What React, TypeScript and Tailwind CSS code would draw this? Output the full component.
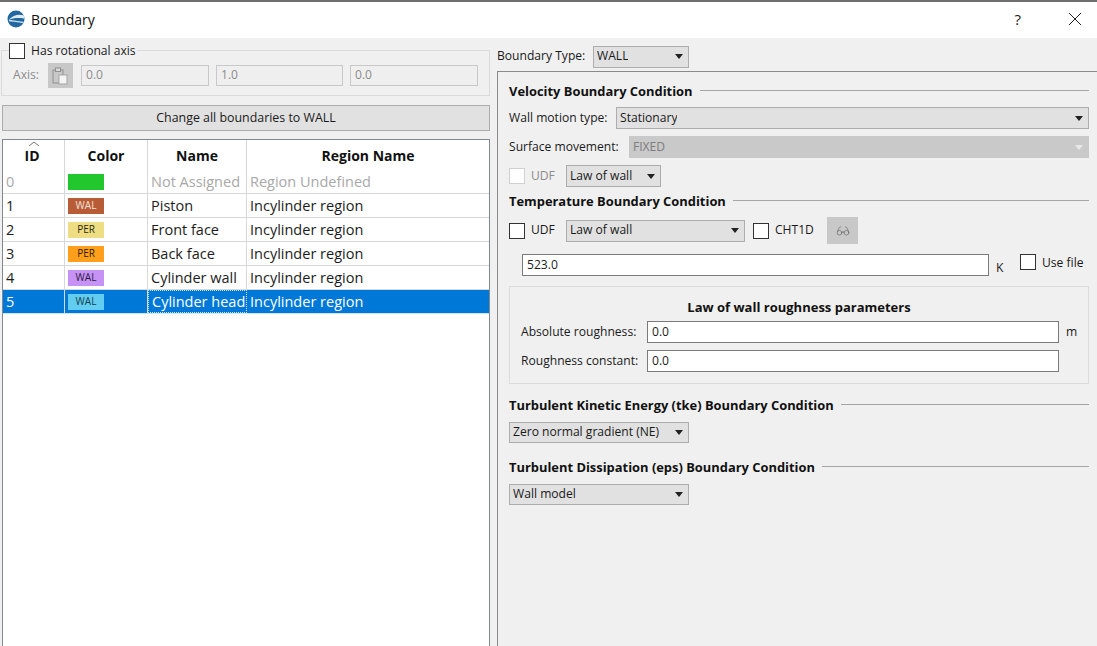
import { ReactNode } from 'react';
import { Glasses } from 'lucide-react';

type Row = {
  id: number;
  color: string;
  tag: string;
  tagColor: string;
  name: string;
  region: string;
};

const rows: Row[] = [
  { id: 0, color: 'bg-[#22c72e]', tag: '', tagColor: '', name: 'Not Assigned', region: 'Region Undefined' },
  { id: 1, color: 'bg-[#b85c38]', tag: 'WAL', tagColor: 'text-[#f5e3da]', name: 'Piston', region: 'Incylinder region' },
  { id: 2, color: 'bg-[#eedd82]', tag: 'PER', tagColor: 'text-[#2a2a10]', name: 'Front face', region: 'Incylinder region' },
  { id: 3, color: 'bg-[#ff9f1c]', tag: 'PER', tagColor: 'text-[#2a1c05]', name: 'Back face', region: 'Incylinder region' },
  { id: 4, color: 'bg-[#c792f5]', tag: 'WAL', tagColor: 'text-[#2a1a3f]', name: 'Cylinder wall', region: 'Incylinder region' },
  { id: 5, color: 'bg-[#62cdf0]', tag: 'WAL', tagColor: 'text-[#12414f]', name: 'Cylinder head', region: 'Incylinder region' },
];

function Logo() {
  return (
    <svg width="18" height="18" viewBox="0 0 18 18">
      <circle cx="9" cy="9" r="8.500" fill="#22679f" />
      <path d="M17 5.500C12 3.500 6 5 1.500 10 6 8 11 7.500 17 8.500z" fill="#dcebf6" />
      <path d="M2 10.500c4 .5 9 1.500 14.500 2" fill="none" stroke="#cfe2f0" strokeWidth="1.300" />
    </svg>
  );
}

function Check({ disabled }: { disabled?: boolean }) {
  return <span className={`block w-4 h-4 shrink-0 bg-white border ${disabled ? 'border-[#cfcfcf]' : 'border-[#333333]'}`} />;
}

function Combo({ label, className, disabled }: { label: string; className: string; disabled?: boolean }) {
  return (
    <div
      className={`flex items-center justify-between shrink-0 border pl-[3px] pr-[5px] ${
        disabled ? 'bg-[#c9c9c9] border-[#c9c9c9] text-[#7d7d7d]' : 'bg-[#e1e1e1] border-[#adadad] text-[#1a1a1a]'
      } ${className}`}
    >
      <span className="truncate">{label}</span>
      <svg width="8" height="5" viewBox="0 0 8 5" className="shrink-0">
        <path d="M0 0h8L4 5z" fill={disabled ? '#e8e8e8' : '#222222'} />
      </svg>
    </div>
  );
}

function Field({ value, className, disabled }: { value: string; className: string; disabled?: boolean }) {
  return (
    <div
      className={`flex items-center border pl-1 ${
        disabled ? 'bg-[#efefef] border-[#c8c8c8] text-[#8c8c8c]' : 'bg-white border-[#7a7a7a] text-[#1a1a1a]'
      } ${className}`}
    >
      {value}
    </div>
  );
}

function SectionTitle({ children }: { children: ReactNode }) {
  return (
    <div className="flex items-center gap-[7px] h-[18px]">
      <span className="font-bold text-[12.9px] whitespace-nowrap text-[#111111]">{children}</span>
      <span className="flex-1 h-px bg-[#a5a5a5] mb-[3px]" />
    </div>
  );
}

function TableRow({ row }: { row: Row }) {
  const selected = row.id === 5;
  const muted = row.id === 0;
  const text = selected ? 'text-white' : muted ? 'text-[#a8a8a8]' : 'text-[#1c1c1c]';
  return (
    <div className={`flex h-6 border-b text-[14.5px] ${selected ? 'bg-[#0078d7] border-[#cde6f7]' : 'border-[#d8d8d8]'} ${text}`}>
      <div className="w-[62px] border-r border-[#d8d8d8] pl-[3px] leading-[23px]">{row.id}</div>
      <div className="w-[83px] border-r border-[#d8d8d8] flex items-center pl-[3px]">
        <span className={`flex items-center justify-center w-9 h-4 text-[10px] ${row.color} ${row.tagColor}`}>{row.tag}</span>
      </div>
      <div
        className={`w-[99px] pl-[3px] whitespace-nowrap ${
          selected ? 'border border-dotted border-[#cfe6f8] leading-[21px] pl-[2px]' : 'border-r border-[#d8d8d8] leading-[23px]'
        }`}
      >
        {row.name}
      </div>
      <div className="flex-1 pl-[3px] leading-[23px]">{row.region}</div>
    </div>
  );
}

export default function App() {
  return (
    <div className="w-[1097px] h-[646px] overflow-hidden flex flex-col bg-[#f0f0f0] text-[12.1px] text-[#1a1a1a] font-['Open_Sans','Noto_Sans',sans-serif]">
      {/* title bar */}
      <div className="h-[38px] shrink-0 bg-white border-t-2 border-[#6e6e6e] flex items-center pl-[7px] pb-[2px]">
        <Logo />
        <span className="ml-[6px] text-[14px] text-[#111111]">Boundary</span>
        <span className="ml-auto text-[15px] mr-[47px]">?</span>
        <svg width="14" height="14" viewBox="0 0 14 14" className="mr-[15px]">
          <path d="M1 1l12 12M13 1L1 13" stroke="#222222" strokeWidth="1" fill="none" />
        </svg>
      </div>

      <div className="flex-1 flex min-h-0">
        {/* left column */}
        <div className="w-[497px] shrink-0 flex flex-col pl-[2px] pr-[7px]">
          <div className="relative mt-3 ml-[-1px] h-[46px] border border-[#dcdcdc] flex items-center pl-[11px] pt-[5px]">
            <div className="absolute left-[7px] top-[-9px] flex items-center gap-[6px] bg-[#f0f0f0] pr-[1px]">
              <Check />
              <span>Has rotational axis</span>
            </div>
            <span className="text-[#8c8c8c] mr-2">Axis:</span>
            <div className="w-[25px] h-[25px] bg-[#c8c8c8] flex items-center justify-center ml-px mr-2">
              <svg width="16" height="18" viewBox="0 0 16 18">
                <rect x="1" y="3" width="10" height="13" fill="none" stroke="#8f8f8f" />
                <rect x="3.500" y="1" width="5" height="3.500" fill="#d8d8d8" stroke="#8f8f8f" />
                <rect x="7" y="8" width="8" height="9" fill="#f4f4f4" stroke="#a5a5a5" />
              </svg>
            </div>
            <div className="flex gap-[7px]">
              <Field value="0.0" disabled className="w-[128px] h-[21px]" />
              <Field value="1.0" disabled className="w-[127px] h-[21px]" />
              <Field value="0.0" disabled className="w-[128px] h-[21px]" />
            </div>
          </div>

          <button className="mt-[9px] h-[26px] shrink-0 bg-[#e1e1e1] border border-[#adadad] text-[#1a1a1a] text-[12.4px] pt-px">
            Change all boundaries to WALL
          </button>

          <div className="mt-2 flex-1 bg-white border border-[#828790] border-b-0 overflow-hidden">
            <div className="relative flex h-[30px] text-[14px] font-bold text-[#111111] text-center">
              <svg width="10" height="5" viewBox="0 0 10 5" className="absolute left-[26px] top-[1px]">
                <path d="M0 5l5-4 5 4" fill="none" stroke="#777777" />
              </svg>
              <div className="w-[62px] border-r border-[#d8d8d8] leading-[31px] pr-[3px]">ID</div>
              <div className="w-[83px] border-r border-[#d8d8d8] leading-[31px]">Color</div>
              <div className="w-[99px] border-r border-[#d8d8d8] leading-[31px]">Name</div>
              <div className="flex-1 leading-[31px]">Region Name</div>
            </div>
            {rows.map((row) => (
              <TableRow key={row.id} row={row} />
            ))}
          </div>
        </div>

        {/* right column */}
        <div className="flex-1 flex flex-col min-w-0">
          <div className="flex items-center h-[33px] shrink-0 pt-[4px]">
            <span className="w-[96px] whitespace-nowrap">Boundary Type:</span>
            <Combo label="WALL" className="w-[96px] h-[22px]" />
          </div>

          <div className="flex-1 border-l border-t border-[#8a8a8a] pl-[11px] pr-[8px] pt-[11px]">
            <SectionTitle>Velocity Boundary Condition</SectionTitle>
            <div className="flex items-center mt-[6px] h-[22px]">
              <span className="w-[107px] whitespace-nowrap">Wall motion type:</span>
              <Combo label="Stationary" className="flex-1 h-[22px]" />
            </div>
            <div className="flex items-center mt-[7px] h-[22px]">
              <span className="w-[120px] whitespace-nowrap">Surface movement:</span>
              <Combo label="FIXED" disabled className="flex-1 h-[22px]" />
            </div>
            <div className="flex items-center mt-[7px] h-[22px]">
              <Check disabled />
              <span className="ml-[6px] w-[35px] text-[#8c8c8c]">UDF</span>
              <Combo label="Law of wall" className="w-[95px] h-[22px]" />
            </div>

            <div className="mt-[6px]">
              <SectionTitle>Temperature Boundary Condition</SectionTitle>
            </div>
            <div className="flex items-center mt-[6px] h-[27px]">
              <Check />
              <span className="ml-[6px] w-[35px]">UDF</span>
              <Combo label="Law of wall" className="w-[179px] h-[22px]" />
              <span className="ml-2">
                <Check />
              </span>
              <span className="ml-[6px] w-[52px]">CHT1D</span>
              <div className="w-[31px] h-[27px] bg-[#c8c8c8] flex items-center justify-center">
                <Glasses size={14} strokeWidth={1.25} className="text-[#6e6e6e]" />
              </div>
            </div>
            <div className="flex items-start mt-[10px] h-[22px] pl-[13px]">
              <Field value="523.0" className="w-[467px] h-[22px]" />
              <span className="ml-[7px] mt-[5px] w-[24px]">K</span>
              <Check />
              <span className="ml-[6px] whitespace-nowrap">Use file</span>
            </div>

            <div className="mt-[10px] h-[98px] border border-[#dcdcdc] pl-[11px] pr-[6px]">
              <div className="text-center font-bold text-[13px] text-[#111111] mt-[11px] h-[18px] leading-[18px] pr-[5px]">
                Law of wall roughness parameters
              </div>
              <div className="flex items-center mt-[5px]">
                <span className="w-[126px] whitespace-nowrap pt-px">Absolute roughness:</span>
                <Field value="0.0" className="w-[412px] h-[22px]" />
                <span className="ml-[7px]">m</span>
              </div>
              <div className="flex items-center mt-[7px]">
                <span className="w-[126px] whitespace-nowrap pt-px">Roughness constant:</span>
                <Field value="0.0" className="w-[412px] h-[22px]" />
              </div>
            </div>

            <div className="mt-[13px]">
              <SectionTitle>Turbulent Kinetic Energy (tke) Boundary Condition</SectionTitle>
            </div>
            <Combo label="Zero normal gradient (NE)" className="w-[180px] h-[21px] mt-[7px]" />

            <div className="mt-[16px]">
              <SectionTitle>Turbulent Dissipation (eps) Boundary Condition</SectionTitle>
            </div>
            <Combo label="Wall model" className="w-[180px] h-[21px] mt-[7px]" />
          </div>
        </div>
      </div>
    </div>
  );
}
